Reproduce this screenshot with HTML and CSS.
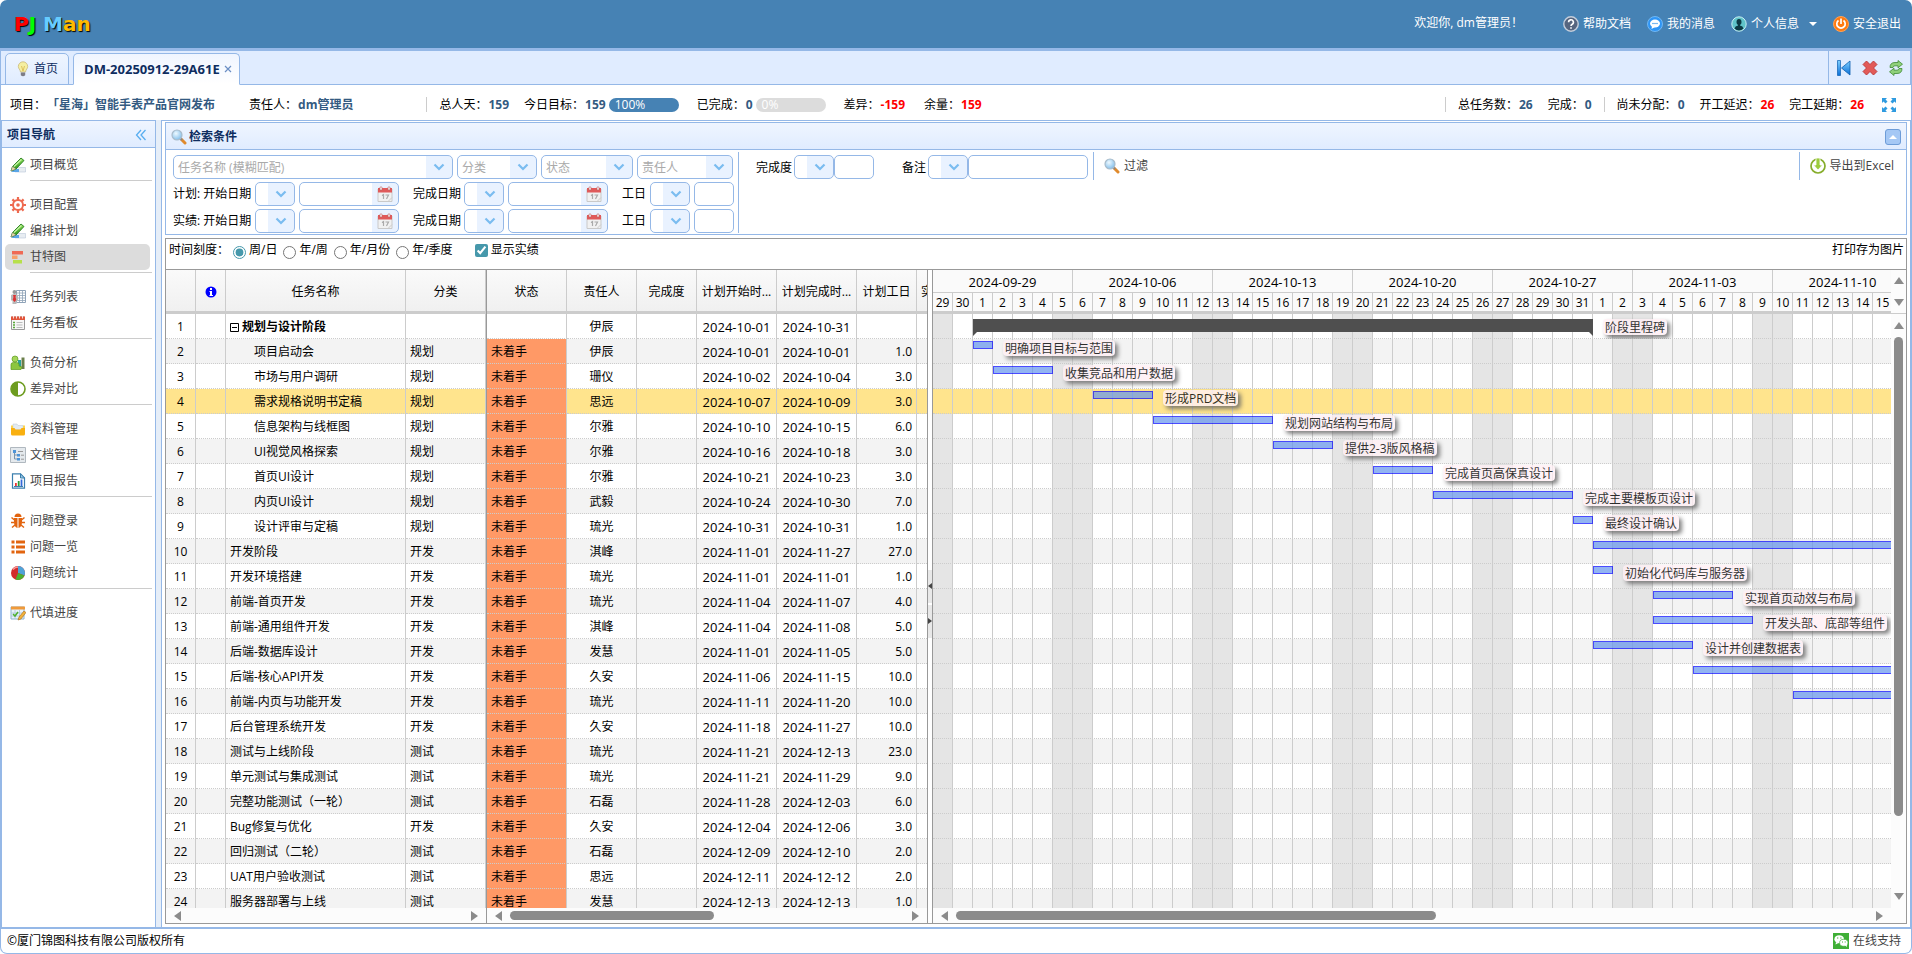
FILE: index.html
```html
<!DOCTYPE html>
<html lang="zh-CN">
<head>
    <meta charset="UTF-8">
    <meta name="viewport" content="width=device-width, initial-scale=1.0">
    <title>PJ Man</title>
    <link rel="stylesheet" href="styles.css">
</head>
<body>
    <svg class="sprite" aria-hidden="true">
        <defs>
            <linearGradient id="green" x1="0" y1="0" x2="0" y2="1"><stop offset="0" stop-color="#8fe05a"/><stop offset="1" stop-color="#1f8a12"/></linearGradient>
            <linearGradient id="blue" x1="0" y1="0" x2="0" y2="1"><stop offset="0" stop-color="#7fd0ff"/><stop offset="1" stop-color="#0a6fd8"/></linearGradient>
            <radialGradient id="lens" cx="0.4" cy="0.35" r="0.7"><stop offset="0" stop-color="#eef9ff"/><stop offset="1" stop-color="#7dbcea"/></radialGradient>
        </defs>
        <symbol id="i-down" viewBox="0 0 12 12"><path d="M1.500 3.500 6 8 10.500 3.500" fill="none" stroke="#7abcf0" stroke-width="2.200"/></symbol>
        <symbol id="i-cal" viewBox="0 0 16 16">
            <path d="M1 3h14v12.500H1z" fill="#f1f1f1" stroke="#c9c9c9"/>
            <path d="M1 2h14v4.500H1z" fill="#e05a5a"/>
            <path d="M3 1h2v3H3zM11 1h2v3h-2z" fill="#fff" stroke="#b66" stroke-width=".6"/>
            <path d="M5 9.500 6.500 8.500V13M8.500 9h3L9.500 13" fill="none" stroke="#aaa" stroke-width="1.200"/>
            <path d="M11 15.500 15 11.500" stroke="#ccc"/>
        </symbol>
        <symbol id="i-search" viewBox="0 0 16 16">
            <path d="M10 10 14 14" stroke="#e08a2c" stroke-width="3" stroke-linecap="round"/>
            <path d="M9 9 11 11" stroke="#888" stroke-width="2"/>
            <circle cx="6" cy="6" r="5" fill="url(#lens)" stroke="#a9bccb" stroke-width="1.200"/>
        </symbol>
        <symbol id="i-pen" viewBox="0 0 16 16">
            <path d="M5 10.500h10.500V15H5z" fill="#e8edf2" stroke="#b9c8d8" stroke-width=".6"/>
            <path d="M4 12h5v3H1.500z" fill="#5aa6e8"/>
            <path d="M1 14 2.500 9.500 11 1l3 2.500L6 12z" fill="url(#green)" stroke="#14700e" stroke-width=".8"/>
            <path d="M4 9.500 11.500 2.500" stroke="#c8f5a8" stroke-width="1.200"/>
            <path d="M1 14 2.500 9.500 6 12z" fill="#e9d8a6" stroke="#777" stroke-width=".4"/>
        </symbol>
        <symbol id="i-gear" viewBox="0 0 16 16">
            <circle cx="8" cy="8" r="5" fill="none" stroke="#ee6a50" stroke-width="2"/>
            <circle cx="8" cy="8" r="1.800" fill="#ee6a50"/>
            <path d="M8 0v3M8 13v3M0 8h3M13 8h3M2.400 2.400l2 2M11.600 11.600l2 2M2.400 13.600l2-2M11.600 4.400l2-2" stroke="#ee6a50" stroke-width="2.200"/>
        </symbol>
        <symbol id="i-gantt" viewBox="0 0 16 16">
            <path d="M2 2h11v3.500H2z" fill="#ef6a55"/><path d="M2 6.500h5.500V10H2z" fill="#f7a06a"/><path d="M3 11h9v3.500H3z" fill="#b7e04a"/>
        </symbol>
        <symbol id="i-tasks" viewBox="0 0 16 16">
            <path d="M6.500 1.500h9v12h-9z" fill="#fff" stroke="#8fa3b8"/>
            <path d="M6.500 4h9M6.500 6.500h9M6.500 9h9M6.500 11.500h9M9.500 1.500v12M12.500 1.500v12" stroke="#8fa3b8" stroke-width=".8"/>
            <circle cx="4.500" cy="3" r="2" fill="#999"/>
            <path d="M1 6q3.500-2 7 0v5.500H6.500V15h-4v-3.500H1z" fill="#b9b9b9"/>
            <path d="M3 6h3l-.5 2 .8 3-1.800 2-1.800-2 .8-3z" fill="#d33"/>
        </symbol>
        <symbol id="i-board" viewBox="0 0 16 16">
            <path d="M1.500 2h13v12.500h-13z" fill="#f7f7f7" stroke="#999"/><path d="M1 1.500h14V5H1z" fill="#e2543a"/>
            <path d="M3.500.5v3M6.500.5v3M9.500.5v3M12.500.5v3" stroke="#fff" stroke-width=".8"/>
            <path d="M3 7.500h2M3 10h2M3 12.500h2" stroke="#59a83c" stroke-width="1.500"/><path d="M6.500 7.500h6M6.500 10h6M6.500 12.500h6" stroke="#bbb"/>
        </symbol>
        <symbol id="i-load" viewBox="0 0 16 16">
            <path d="M8 5h3v9H8z" fill="#2aa198"/><path d="M11.500 2.500h3V14h-3z" fill="#6a7f4a"/>
            <circle cx="5" cy="4" r="3" fill="#a5d65a" stroke="#5b9a1c" stroke-width=".7"/>
            <path d="M1 13V9.500q0-2 2.500-2h3q2.500 0 2.500 2V11l3 1-1 2.500H1z" fill="#8cc63f" stroke="#5b9a1c" stroke-width=".7"/>
        </symbol>
        <symbol id="i-half" viewBox="0 0 16 16">
            <circle cx="8" cy="8" r="7" fill="#fff" stroke="#6d9c1f" stroke-width="1.600"/><path d="M8 1a7 7 0 0 0 0 14z" fill="#6d9c1f"/>
        </symbol>
        <symbol id="i-folder" viewBox="0 0 16 16">
            <path d="M3 3h4l1 1.500h5V9H3z" fill="#e3ebf2" stroke="#b9c6d2" stroke-width=".5"/><path d="M1 4.500h2V8H1zM13 4.500h2V8h-2z" fill="#fcd34d"/><path d="M1 7h3.500l1 1.500h5l1-1.500H15v6q0 1.500-1.500 1.500h-11Q1 14.500 1 13z" fill="#f9b010"/>
        </symbol>
        <symbol id="i-tree" viewBox="0 0 16 16">
            <path d="M.5.5h15v15H.5z" fill="#e4e9ed" stroke="#b0b8bf"/>
            <path d="M4.500 5v7M4.500 8h4M4.500 12h4" stroke="#7a94ad" fill="none"/>
            <path d="M3 3h3v3H3zM7 7h3v2.500H7zM7 11h3v2.500H7z" fill="#4d94d8"/><path d="M8 4.500h5M11 8.200h3M11 12.200h3" stroke="#999"/>
        </symbol>
        <symbol id="i-report" viewBox="0 0 16 16">
            <path d="M2.500.8h8L14.500 5v10.200h-12z" fill="#fff" stroke="#3b7fae" stroke-width="1.200"/><path d="M10.500.8V5h4z" fill="#9cc9e4" stroke="#3b7fae"/>
            <path d="M4 13.500h9" stroke="#3b7fae"/><path d="M5 10h1.800v3H5z" fill="#e33"/><path d="M7.800 8h1.800v5H7.800z" fill="#2a9a3a"/><path d="M10.600 6.500h1.800V13h-1.800z" fill="#3568d8"/>
        </symbol>
        <symbol id="i-bug" viewBox="0 0 16 16">
            <path d="M4.500 4q0-3.500 3.500-3.500T11.500 4zM4 5h3.500v10Q4 14 4 9zM8.500 5H12v4q0 5-3.500 6z" fill="#e2640f"/>
            <path d="M1.500 4.500 4.500 7M1 9.500h3M2 14.500l3-2.500M14.500 4.500l-3 2.500M15 9.500h-3M14 14.500l-3-2.500" stroke="#e2640f" stroke-width="1.500"/>
        </symbol>
        <symbol id="i-list" viewBox="0 0 16 16">
            <path d="M1.500 1.500h3v3h-3zM1.500 6.500h3v3h-3zM1.500 11.500h3v3h-3zM6 1.500h9v3H6zM6 6.500h9v3H6zM6 11.500h9v3H6z" fill="#e2640f"/>
        </symbol>
        <symbol id="i-pie" viewBox="0 0 16 16">
            <circle cx="8" cy="8" r="7" fill="#d22a2a"/><path d="M8 8V1a7 7 0 0 1 6.500 9.500z" fill="#4fa3d8"/><path d="M8 8l6.500 2.500A7 7 0 0 1 5.500 14.500z" fill="#4caf2e"/><path d="M3 4.500Q5 2 8 2" stroke="#f79a9a" stroke-width="1.500" fill="none"/>
        </symbol>
        <symbol id="i-fill" viewBox="0 0 16 16">
            <path d="M1 2h13v12H1z" fill="#e8f2fa" stroke="#8fb4d0"/><path d="M1 1.500h14v3H1z" fill="#f09a3a"/>
            <path d="M1 8h13M1 11h13M5 5v9M9.500 5v9" stroke="#a9c4da" stroke-width=".8"/><path d="M3 9l2 2 3-4" fill="none" stroke="#4caf2e" stroke-width="1.500"/>
            <path d="M8 15l1-3 5-6 2 1.500-5 6.500z" fill="#f2b23a" stroke="#a86a18" stroke-width=".6"/>
        </symbol>
    </svg>

    <div class="page">
        <header class="top">
            <h1 class="logo"><span class="c1">P</span><span class="c2">J</span> <span class="c3">M</span><span class="c4">an</span></h1>
            <span class="hello">欢迎你, dm管理员！</span>
            <nav class="top-links">
                <a href="#">
                    <svg class="icon" viewBox="0 0 16 16"><circle cx="8" cy="8" r="7.200" fill="#56657f" stroke="#c5cedb" stroke-width="1.400"/><path d="M5.600 6.300a2.400 2.400 0 1 1 3.600 2Q8 9 8 10M8 11.300v1.500" fill="none" stroke="#fff" stroke-width="1.600"/></svg>
                    帮助文档</a>
                <a href="#">
                    <svg class="icon" viewBox="0 0 16 16"><circle cx="8" cy="8" r="7.500" fill="#2f95f5" stroke="#7cc2fb" stroke-width=".8"/><ellipse cx="8" cy="7.500" rx="5" ry="4" fill="#fff"/><path d="M5 10.500 4.500 13 8 11z" fill="#fff"/><path d="M5 7.500h6" stroke="#7ab8f0" stroke-width="1.200"/></svg>
                    我的消息</a>
                <a href="#">
                    <svg class="icon" viewBox="0 0 16 16"><circle cx="8" cy="8" r="7.200" fill="#5fc3c9" stroke="#c8f0f2"/><ellipse cx="8" cy="6" rx="2.500" ry="3" fill="#0c3a44"/><path d="M3.500 12.500Q4 10 7 9.500V8h2v1.500q3 .5 3.500 3-2 2-4.500 2t-4.500-2z" fill="#0c3a44"/></svg>
                    个人信息<i class="caret"></i></a>
                <a href="#">
                    <svg class="icon" viewBox="0 0 16 16"><circle cx="8" cy="8" r="7.500" fill="#ff7a0f" stroke="#ffa257"/><path d="M5.500 4.500a4.200 4.200 0 1 0 5 0M8 2.500v5.500" fill="none" stroke="#fff" stroke-width="1.700"/></svg>
                    安全退出</a>
            </nav>
        </header>

        <div class="tabs">
            <a href="#" class="tab">
                <svg class="icon" viewBox="0 0 16 16"><path d="M8 .8a4.700 4.700 0 0 1 4.700 4.700c0 2-1.900 3-2.200 5.500h-5C5.200 8.500 3.300 7.500 3.300 5.500A4.700 4.700 0 0 1 8 .8z" fill="#f5efa0" stroke="#c9b97a" stroke-width=".8"/><path d="M6.500 5 8 10l1.500-5" fill="none" stroke="#d8b64a" stroke-width=".8"/><path d="M5.800 11.500h4.400v2.800q-2.200 2-4.400 0z" fill="#7d7d86"/></svg>
                首页</a>
            <a href="#" class="tab active">DM-20250912-29A61E
                <svg class="close" viewBox="0 0 8 8"><path d="M1 1l6 6M7 1 1 7" stroke="#6b8fc4" stroke-width="1.200"/></svg>
            </a>
            <div class="tab-tools">
                <button type="button" aria-label="返回"><svg class="icon" viewBox="0 0 16 16"><path d="M1.500.5h3v15h-3z" fill="url(#blue)" stroke="#0b5fb0" stroke-width=".7"/><path d="M14 1v14L5.500 8z" fill="url(#blue)" stroke="#0b5fb0" stroke-width=".8"/></svg></button>
                <button type="button" aria-label="关闭"><svg class="icon" viewBox="0 0 16 16"><path d="M4.500 1 8 4.500 11.500 1 15 4.500 11.500 8 15 11.500 11.500 15 8 11.500 4.500 15 1 11.500 4.500 8 1 4.500z" fill="#e25a58" stroke="#b93434" stroke-width=".9" stroke-linejoin="round"/></svg></button>
                <button type="button" aria-label="刷新"><svg class="icon" viewBox="0 0 16 16"><path d="M2 7.500Q2 2.500 7 2.500h3V.5l4.500 3.700L10 7.800V5.800H7Q5 5.800 5 7.500zM14 8.500q0 5-5 5H6v2l-4.500-3.700L6 8.200v2h3q2 0 2-1.700z" fill="#8fd07a" stroke="#3f8a34" stroke-width=".8"/></svg></button>
            </div>
        </div>

        <div class="info">
            <span>项目：</span><b>「星海」智能手表产品官网发布</b>
            <span class="owner">责任人：</span><b>dm管理员</b>
            <span class="sep wide"></span>
            <span>总人天：</span><b>159</b>
            <span class="gap">今日目标：</span><b>159</b><span class="pill full">100%</span>
            <span class="gap">已完成：</span><b>0</b><span class="pill">0%</span>
            <span class="gap">差异：</span><b class="red">-159</b>
            <span class="gap rest">余量：</span><b class="red">159</b>
            <div class="info-right">
                <span class="sep"></span>
                <span>总任务数：</span><b>26</b>
                <span class="gap">完成：</span><b>0</b>
                <span class="sep"></span>
                <span>尚未分配：</span><b>0</b>
                <span class="gap">开工延迟：</span><b class="red">26</b>
                <span class="gap">完工延期：</span><b class="red">26</b>
                <button type="button" class="expand" aria-label="全屏"><svg class="icon" viewBox="0 0 16 16"><path d="M1 1h5L4.500 2.500 6.500 4.500l-2 2L2.500 4.500 1 6zM15 1v5l-1.500-1.500-2 2-2-2 2-2L10 1zM1 15v-5l1.500 1.500 2-2 2 2-2 2L6 15zM15 15h-5l1.500-1.500-2-2 2-2 2 2L15 10z" fill="#2f9be0"/></svg></button>
            </div>
        </div>

        <div class="layout">
            <aside class="west">
                <div class="west-head">项目导航
                    <svg viewBox="0 0 12 12"><path d="M6 1 1.500 6 6 11M10.500 1 6 6l4.500 5" fill="none" stroke="#58aef0" stroke-width="1.300"/></svg>
                </div>
                <nav class="menu">
                    <div class="group">
                        <a href="#"><svg class="icon"><use href="#i-pen"/></svg>项目概览</a>
                    </div>
                    <div class="group">
                        <a href="#"><svg class="icon"><use href="#i-gear"/></svg>项目配置</a>
                        <a href="#"><svg class="icon"><use href="#i-pen"/></svg>编排计划</a>
                        <a href="#" class="on"><svg class="icon"><use href="#i-gantt"/></svg>甘特图</a>
                    </div>
                    <div class="group">
                        <a href="#"><svg class="icon"><use href="#i-tasks"/></svg>任务列表</a>
                        <a href="#"><svg class="icon"><use href="#i-board"/></svg>任务看板</a>
                    </div>
                    <div class="group">
                        <a href="#"><svg class="icon"><use href="#i-load"/></svg>负荷分析</a>
                        <a href="#"><svg class="icon"><use href="#i-half"/></svg>差异对比</a>
                    </div>
                    <div class="group">
                        <a href="#"><svg class="icon"><use href="#i-folder"/></svg>资料管理</a>
                        <a href="#"><svg class="icon"><use href="#i-tree"/></svg>文档管理</a>
                        <a href="#"><svg class="icon"><use href="#i-report"/></svg>项目报告</a>
                    </div>
                    <div class="group">
                        <a href="#"><svg class="icon"><use href="#i-bug"/></svg>问题登录</a>
                        <a href="#"><svg class="icon"><use href="#i-list"/></svg>问题一览</a>
                        <a href="#"><svg class="icon"><use href="#i-pie"/></svg>问题统计</a>
                    </div>
                    <div class="group">
                        <a href="#"><svg class="icon"><use href="#i-fill"/></svg>代填进度</a>
                    </div>
                </nav>
            </aside>

            <main class="center">
                <section class="search">
                    <div class="search-head">
                        <svg class="icon"><use href="#i-search"/></svg>检索条件
                        <button type="button" class="fold" aria-label="收起"><i></i></button>
                    </div>
                    <form class="search-body">
                        <div class="filters">
                            <div class="line">
                                <span class="combo w280"><select aria-label="任务名称"><option>任务名称 (模糊匹配)</option></select><svg><use href="#i-down"/></svg></span>
                                <span class="combo w80"><select aria-label="分类"><option>分类</option></select><svg><use href="#i-down"/></svg></span>
                                <span class="combo w92"><select aria-label="状态"><option>状态</option></select><svg><use href="#i-down"/></svg></span>
                                <span class="combo w96"><select aria-label="责任人"><option>责任人</option></select><svg><use href="#i-down"/></svg></span>
                            </div>
                            <div class="line">
                                <label for="p1">计划: 开始日期</label>
                                <span class="combo w40"><select id="p1"><option></option></select><svg><use href="#i-down"/></svg></span>
                                <span class="combo w100"><input type="text" aria-label="计划开始日期"><svg class="cal"><use href="#i-cal"/></svg></span>
                                <label for="p2" class="l2">完成日期</label>
                                <span class="combo w40"><select id="p2"><option></option></select><svg><use href="#i-down"/></svg></span>
                                <span class="combo w100"><input type="text" aria-label="计划完成日期"><svg class="cal"><use href="#i-cal"/></svg></span>
                                <label for="p3" class="l3">工日</label>
                                <span class="combo w40"><select id="p3"><option></option></select><svg><use href="#i-down"/></svg></span>
                                <input type="text" class="plain w40" aria-label="计划工日">
                            </div>
                            <div class="line">
                                <label for="a1">实绩: 开始日期</label>
                                <span class="combo w40"><select id="a1"><option></option></select><svg><use href="#i-down"/></svg></span>
                                <span class="combo w100"><input type="text" aria-label="实绩开始日期"><svg class="cal"><use href="#i-cal"/></svg></span>
                                <label for="a2" class="l2">完成日期</label>
                                <span class="combo w40"><select id="a2"><option></option></select><svg><use href="#i-down"/></svg></span>
                                <span class="combo w100"><input type="text" aria-label="实绩完成日期"><svg class="cal"><use href="#i-cal"/></svg></span>
                                <label for="a3" class="l3">工日</label>
                                <span class="combo w40"><select id="a3"><option></option></select><svg><use href="#i-down"/></svg></span>
                                <input type="text" class="plain w40" aria-label="实绩工日">
                            </div>
                        </div>
                        <div class="extra">
                            <label for="rate">完成度</label>
                            <span class="combo w40"><select id="rate"><option></option></select><svg><use href="#i-down"/></svg></span>
                            <input type="text" class="plain w40" aria-label="完成度值">
                            <label for="memo" class="memo">备注</label>
                            <span class="combo w40"><select id="memo"><option></option></select><svg><use href="#i-down"/></svg></span>
                            <input type="text" class="plain w120" aria-label="备注内容">
                        </div>
                        <button type="button" class="tool"><svg class="icon"><use href="#i-search"/></svg>过滤</button>
                        <button type="button" class="tool export">
                            <svg class="icon" viewBox="0 0 16 16"><circle cx="8" cy="8" r="7" fill="#fff" stroke="#86ad2b" stroke-width="1.700"/><path d="M6 0h4v7h2.500L8 12 3.500 7H6z" fill="#9ccc3c" stroke="#fff" stroke-width=".8"/></svg>
                            导出到Excel</button>
                    </form>
                </section>

                <section class="gantt">
                    <div class="scale">
                        <span class="scale-label">时间刻度：</span>
                        <label><input type="radio" name="scale" checked>周/日</label>
                        <label><input type="radio" name="scale">年/周</label>
                        <label><input type="radio" name="scale">年/月份</label>
                        <label><input type="radio" name="scale">年/季度</label>
                        <label class="check"><input type="checkbox" checked>显示实绩</label>
                        <a href="#" class="print">打印存为图片</a>
                    </div>
                    <div class="panes">
                        <div class="pane frozen">
                            <div class="view">
                                <table>
                                    <colgroup><col class="c30"><col class="c30"><col class="c180"><col class="c80"></colgroup>
                                    <thead><tr><th></th><th><svg class="tip" viewBox="0 0 12 12"><circle cx="6" cy="6" r="5.500" fill="#00f"/><path d="M5 2h2v2H5zM4.500 5H7v4h1v1H4.500V9H5V6h-.5z" fill="#fff"/></svg></th><th>任务名称</th><th>分类</th></tr></thead>
                                    <tbody id="frozen"></tbody>
                                </table>
                            </div>
                            <div class="hbar"><i class="left"></i><i class="right"></i></div>
                        </div>
                        <div class="pane detail">
                            <div class="view">
                                <table>
                                    <colgroup><col class="c80"><col class="c70"><col class="c60"><col class="c80"><col class="c80"><col class="c60"><col class="c30"></colgroup>
                                    <thead><tr><th>状态</th><th>责任人</th><th>完成度</th><th>计划开始时...</th><th>计划完成时...</th><th>计划工日</th><th class="last">实绩</th></tr></thead>
                                    <tbody id="detail"></tbody>
                                </table>
                            </div>
                            <div class="hbar"><i class="left"></i><b class="thumb t204"></b><i class="right"></i></div>
                        </div>
                        <div class="splitter"><span><i class="left"></i></span><span><i class="right"></i></span></div>
                        <div class="pane chart">
                            <div class="chart-main">
                                <div class="view">
                                    <div class="weeks" id="weeks"></div>
                                    <div class="days" id="days"></div>
                                    <div class="lanes" id="lanes"></div>
                                </div>
                                <div class="vbar">
                                    <div class="spin"><i class="up"></i><i class="down"></i></div>
                                    <i class="up"></i><b class="vthumb"></b><i class="down"></i>
                                </div>
                            </div>
                            <div class="hbar inset"><i class="left"></i><b class="thumb t480"></b><i class="right"></i></div>
                        </div>
                    </div>
                </section>
            </main>
        </div>

        <footer class="foot">
            <span>©厦门锦图科技有限公司版权所有</span>
            <a href="#"><svg class="icon" viewBox="0 0 16 16"><path d="M0 0h16v16H0z" fill="#3faf36"/><ellipse cx="6.200" cy="6.200" rx="4.800" ry="4" fill="#fff"/><path d="M3 9 2.500 11.500 5.500 10z" fill="#fff"/><ellipse cx="10.800" cy="9.800" rx="4.200" ry="3.500" fill="#fff" stroke="#3faf36" stroke-width=".7"/><path d="M12 12.500l2 1.500-.3-2.500z" fill="#fff"/><path d="M4 5h1.300M7.200 5h1.300M9 9h1M11.700 9h1" stroke="#3faf36" stroke-width="1.200"/></svg>在线支持</a>
        </footer>
    </div>
    <script src="gantt.js"></script>
</body>
</html>
```

FILE: styles.css
```css
* {
    box-sizing: border-box;
}

body {
    margin: 0;
    font: 12px/16px "Open Sans", "Noto Sans CJK SC", sans-serif;
    color: #000;
    background: #fff;
}

a {
    color: inherit;
    text-decoration: none;
}

button {
    font: inherit;
    padding: 0;
    border: 0;
    background: none;
    cursor: pointer;
}

/* display: none would switch the gradients off */
.sprite {
    position: absolute;
    width: 0;
    height: 0;
}

.icon {
    width: 16px;
    height: 16px;
    flex: none;
    display: block;
}

.page {
    display: flex;
    flex-direction: column;
    height: 100vh;
    overflow: hidden;
}

/* header */
.top {
    display: flex;
    align-items: center;
    height: 51px;
    flex: none;
    padding: 0 11px 3px 14px;
    background: #4682b4;
    border-bottom: 3px solid #95b8e7;
    border-radius: 7px 7px 0 0;
    color: #fff;
}

.logo {
    margin: 0;
    padding-top: 2px;
    font: bold 20px/24px "DejaVu Sans", sans-serif;
    text-shadow: 1px 1px 1px #000;
}

.c1 { color: #f00; }
.c2 { color: #0f0; }
.c3 { color: #6cf; }
.c4 { color: #fb0; }

.hello {
    margin-left: auto;
    margin-right: 40px;
}

.top-links {
    display: flex;
    gap: 16px;
    padding-top: 2px;
}

.top-links a {
    display: flex;
    align-items: center;
    gap: 4px;
}

.caret {
    margin: 0 0 0 6px;
    border: 4px solid transparent;
    border-top-color: #fff;
    border-bottom: 0;
}

/* tabs */
.tabs {
    display: flex;
    align-items: flex-end;
    gap: 4px;
    height: 34px;
    flex: none;
    padding-left: 4px;
    background: #e0ecff;
    border: solid #95b8e7;
    border-width: 0 2px 0 1px;
    box-shadow: inset 0 -1px #95b8e7;
}

.tab {
    display: flex;
    align-items: center;
    gap: 3px;
    height: 32px;
    padding: 0 10px 0 9px;
    color: #0e2d5f;
    border: 1px solid #95b8e7;
    border-radius: 5px 5px 0 0;
    background: linear-gradient(#eff5ff, #e0ecff);
}

.tab.active {
    padding: 0 7px 0 10px;
    font-size: 13px;
    font-weight: bold;
    background: linear-gradient(#eff5ff, #fff);
    border-bottom-color: #fff;
}

.close {
    width: 8px;
    height: 8px;
    margin-left: 1px;
}

.tab-tools {
    display: flex;
    align-items: center;
    gap: 10px;
    height: 33px;
    margin-left: auto;
    margin-bottom: 1px;
    padding: 0 6px 0 7px;
    border-left: 1px solid #95b8e7;
}

/* project summary */
.info {
    display: flex;
    align-items: center;
    height: 35px;
    flex: none;
    padding: 4px 14px 0 9px;
    border: solid #95b8e7;
    border-width: 0 1px;
    white-space: nowrap;
}

.info b {
    color: #335a81;
    margin-left: 1px;
}

.info .red {
    color: #f00;
}

.info .owner {
    margin-left: 34px;
}

.info .gap {
    margin-left: 15px;
}

.info .rest {
    margin-left: 19px;
}

.sep {
    width: 1px;
    height: 15px;
    margin: 0 12px;
    background: #ccc;
}

.sep.wide {
    margin-left: 73px;
}

.pill {
    width: 70px;
    height: 14px;
    margin: 0 3px;
    padding-left: 6px;
    line-height: 14px;
    border-radius: 7px;
    background: #dcdcdc;
    color: #fff;
}

.pill.full {
    background: #4682b4;
}

.info-right {
    display: flex;
    align-items: center;
    margin-left: auto;
}

.expand {
    margin-left: 17px;
}

/* body */
.layout {
    display: flex;
    gap: 5px;
    flex: 1;
    min-height: 0;
    background: #e6eef8;
    border: solid #95b8e7;
    border-width: 0 2px 2px 1px;
}

.west {
    width: 155px;
    flex: none;
    background: #fff;
    border: 1px solid #95b8e7;
    border-bottom: 0;
}

.west-head {
    display: flex;
    align-items: center;
    justify-content: space-between;
    height: 27px;
    padding: 1px 8px 0 5px;
    font-weight: bold;
    color: #0e2d5f;
    background: linear-gradient(#eff5ff, #e0ecff);
    border-bottom: 1px solid #95b8e7;
}

.west-head svg {
    width: 12px;
    height: 12px;
}

.menu {
    padding: 4px 3px 0;
    color: #444;
}

.menu a {
    display: flex;
    align-items: center;
    gap: 4px;
    height: 26px;
    margin-right: 2px;
    padding-left: 5px;
    border-radius: 5px;
}

.menu .on {
    background: #dcdcdc;
}

.group + .group::before {
    content: "";
    display: block;
    height: 1px;
    margin: 2px 0 11px 25px;
    background: #ccc;
}

.center {
    display: flex;
    flex-direction: column;
    gap: 3px;
    flex: 1;
    min-width: 0;
    padding: 1px 3px 3px;
    background: #fff;
    border: solid #95b8e7;
    border-width: 1px 0 0 1px;
}

/* search panel */
.search {
    border: 1px solid #95b8e7;
}

.search-head {
    display: flex;
    align-items: center;
    gap: 2px;
    height: 27px;
    padding: 1px 5px 0;
    font-weight: bold;
    color: #0e2d5f;
    background: linear-gradient(#eff5ff, #e0ecff);
    border-bottom: 1px solid #95b8e7;
}

.fold {
    display: flex;
    align-items: center;
    justify-content: center;
    width: 16px;
    height: 16px;
    margin-left: auto;
    border: 1px solid #6d9cd8;
    border-radius: 3px;
    background: #a5c8f5;
}

.fold i {
    border: 4px solid transparent;
    border-bottom-color: #fff;
    border-top: 0;
}

.search-body {
    display: flex;
    align-items: flex-start;
    padding: 2px 4px 1px 7px;
}

.filters {
    display: grid;
    gap: 3px;
    padding: 3px 4px 0 0;
    border-right: 1px solid #95b8e7;
}

.line {
    display: flex;
    align-items: center;
    gap: 4px;
}

.line label {
    width: 78px;
    white-space: nowrap;
}

.line .l2 {
    width: 47px;
    margin-left: 10px;
}

.line .l3 {
    width: 24px;
    margin-left: 10px;
}

.combo {
    display: flex;
    position: relative;
    height: 24px;
    border: 1px solid #95b8e7;
    border-radius: 5px;
    background: linear-gradient(#e9f2ff, #e9f2ff) right / 26px 100% no-repeat #fff;
    overflow: hidden;
}

.combo select,
.combo input {
    appearance: none;
    width: 100%;
    padding: 1px 28px 0 4px;
    border: 0;
    background: none;
    font: inherit;
    color: #aaa;
}

/* the arrow lies over the select */
.combo svg {
    position: absolute;
    right: 7px;
    top: 5px;
    width: 12px;
    height: 12px;
    pointer-events: none;
}

.combo .cal {
    right: 5px;
    top: 3px;
    width: 16px;
    height: 16px;
}

.plain {
    height: 24px;
    padding: 0 4px;
    border: 1px solid #95b8e7;
    border-radius: 5px;
    font: inherit;
}

.w40 { width: 40px; }
.w80 { width: 80px; }
.w92 { width: 92px; }
.w96 { width: 96px; }
.w100 { width: 100px; }
.w120 { width: 120px; }
.w280 { width: 280px; }

.extra {
    display: flex;
    align-items: center;
    padding: 3px 5px 0 17px;
}

.extra label {
    padding-top: 2px;
    margin-right: 2px;
}

.extra .memo {
    margin-left: 28px;
}

.tool {
    display: flex;
    align-items: center;
    gap: 4px;
    height: 28px;
    padding-left: 10px;
    border-left: 1px solid #95b8e7;
    color: #444;
}

.export {
    margin-left: auto;
    padding-right: 8px;
}

/* gantt */
.gantt {
    display: flex;
    flex-direction: column;
    flex: 1;
    min-height: 0;
    border: 1px solid #999;
}

.scale {
    display: flex;
    height: 31px;
    flex: none;
    padding: 3px 2px 0 3px;
    border-bottom: 1px solid #999;
}

.scale label {
    display: flex;
    align-items: flex-start;
    gap: 3px;
    margin-right: 6px;
}

.scale-label {
    width: 64px;
}

.scale input {
    width: 13px;
    height: 13px;
    margin: 4px 0 0;
    accent-color: #4698ab;
}

.scale .check {
    margin-left: 16px;
}

.scale .check input {
    margin-top: 2px;
}

.print {
    margin-left: auto;
}

.panes {
    display: flex;
    flex: 1;
    min-height: 0;
}

.pane {
    display: flex;
    flex-direction: column;
    flex: none;
    min-width: 0;
}

.frozen {
    width: 321px;
    border-right: 1px solid #999;
}

.detail {
    width: 440px;
}

.pane.chart {
    flex: 1;
}

.view {
    flex: 1;
    min-width: 0;
    min-height: 0;
    overflow: hidden;
}

table {
    table-layout: fixed;
    width: 0;
    border-collapse: separate;
    border-spacing: 0;
}

.c30 { width: 30px; }
.c60 { width: 60px; }
.c70 { width: 70px; }
.c80 { width: 80px; }
.c180 { width: 180px; }

th {
    height: 44px;
    padding: 2px 0 0;
    font-weight: normal;
    white-space: nowrap;
    overflow: hidden;
    background: linear-gradient(#fafafa, #f0f0f0);
    border-right: 1px solid #ccc;
    border-bottom: 3px solid #ccc;
}

.last {
    padding-left: 4px;
    text-align: left;
}

td {
    height: 25px;
    padding: 2px 4px 0;
    white-space: nowrap;
    overflow: hidden;
    border-right: 1px solid #ccc;
    border-bottom: 1px dotted #ccc;
}

.tip {
    display: block;
    width: 12px;
    height: 12px;
    margin: 0 auto;
}

.mid { text-align: center; }
.num { text-align: right; }

.date {
    padding-left: 0;
    padding-right: 0;
    font-size: 13px;
    text-align: center;
}

.sub {
    padding-left: 28px;
}

.todo {
    background: #f96;
}

tbody tr:nth-child(even),
.lane:nth-child(even) {
    background-color: #f3f3f3;
}

tbody .picked:nth-child(even),
.lane.picked:nth-child(even) {
    background-color: #ffe48d;
}

.stage {
    display: flex;
    align-items: center;
    gap: 3px;
    font-weight: bold;
}

.stage svg {
    width: 9px;
    height: 9px;
}

/* timeline */
.weeks,
.days {
    display: flex;
    height: 23px;
    background: #fafafa;
}

.weeks span {
    width: 140px;
    flex: none;
    font-size: 13px;
    line-height: 24px;
    text-align: center;
    border: solid #ccc;
    border-width: 0 1px 1px 0;
}

.days {
    height: 21px;
    border-bottom: 3px solid #ccc;
}

.days span {
    width: 20px;
    flex: none;
    line-height: 20px;
    text-align: center;
    border-right: 1px solid #ccc;
}

.lane {
    position: relative;
    height: 25px;
    border-bottom: 1px dotted #ccc;
    background-image:
        repeating-linear-gradient(90deg, transparent 0 19px, #ccc 19px 20px),
        repeating-linear-gradient(90deg, #e5e5e5 0 20px, transparent 20px 120px, #e5e5e5 120px 140px);
}

.lane.picked {
    background-image: repeating-linear-gradient(90deg, transparent 0 19px, #ccc 19px 20px);
}

.bar {
    position: absolute;
    top: 2px;
    height: 8px;
    border: 1px solid #00f;
    background: #6495ed;
    opacity: 0.7;
}

.bar.sum {
    top: 5px;
    height: 17px;
    border: 0;
    background: #4f4f4f;
    opacity: 1;
    clip-path: polygon(0 0, 100% 0, 100% 100%, calc(100% - 4px) 13px, 4px 13px, 0 100%);
}

.note {
    position: absolute;
    top: 1px;
    height: 16px;
    margin-left: 10px;
    padding: 0 2px;
    line-height: 18px;
    white-space: nowrap;
    border-radius: 4px;
    background: #fff0f5;
    box-shadow: 3px 3px 4px #666;
    opacity: 0.8;
}

.sum + .note {
    top: 5px;
}

/* scroll bars */
.hbar {
    display: flex;
    align-items: center;
    height: 15px;
    flex: none;
    padding: 0 8px;
    background: #fcfcfc;
}

.hbar.inset {
    padding-right: 23px;
}

.left,
.right,
.up,
.down {
    border: 5px solid transparent;
}

.left {
    border-left: 0;
    border-right: 7px solid #8b8b8b;
}

.right {
    border-right: 0;
    border-left: 7px solid #8b8b8b;
    margin-left: auto;
}

.up {
    border-top: 0;
    border-bottom: 7px solid #8b8b8b;
}

.down {
    border-bottom: 0;
    border-top: 7px solid #8b8b8b;
    margin-top: auto;
}

.thumb {
    height: 9px;
    margin-left: 8px;
    border-radius: 5px;
    background: #8b8b8b;
}

.t204 { width: 204px; }
.t480 { width: 480px; }

.splitter {
    display: flex;
    flex-direction: column;
    justify-content: center;
    gap: 2px;
    width: 6px;
    flex: none;
    border: solid #999;
    border-width: 0 1px;
    padding-top: 14px;
}

.splitter span {
    display: flex;
    align-items: center;
    height: 33px;
    background: #e8e8e8;
}

.splitter i {
    margin: 0;
    border-width: 3px 4px 3px 0;
    border-right-color: #444;
}

.splitter .right {
    border-width: 3px 0 3px 4px;
    border-left-color: #444;
}

.chart-main {
    display: flex;
    flex: 1;
    min-height: 0;
}

.vbar {
    display: flex;
    flex-direction: column;
    align-items: center;
    width: 15px;
    flex: none;
    padding-bottom: 8px;
    background: #fcfcfc;
}

.spin {
    display: flex;
    flex-direction: column;
    align-items: center;
    width: 100%;
    height: 44px;
    margin-bottom: 8px;
    padding: 7px 0;
    border-bottom: 1px solid #ccc;
}

.vthumb {
    width: 9px;
    height: 76%;
    margin-top: 8px;
    border-radius: 5px;
    background: #8b8b8b;
}

/* footer */
.foot {
    display: flex;
    align-items: center;
    justify-content: space-between;
    height: 25px;
    flex: none;
    padding: 0 10px 0 6px;
    border: 1px solid #95b8e7;
    border-top: 0;
    border-radius: 0 0 7px 7px;
}

.foot a {
    display: flex;
    gap: 4px;
    color: #444;
}
```

FILE: gantt.js
```js
// 名称, 分类, 责任人, 开始, 完成, 工日, 备注
var tasks = [
    ["规划与设计阶段", "", "伊辰", "2024-10-01", "2024-10-31", "", "阶段里程碑"],
    ["项目启动会", "规划", "伊辰", "2024-10-01", "2024-10-01", "1.0", "明确项目目标与范围"],
    ["市场与用户调研", "规划", "珊仪", "2024-10-02", "2024-10-04", "3.0", "收集竞品和用户数据"],
    ["需求规格说明书定稿", "规划", "思远", "2024-10-07", "2024-10-09", "3.0", "形成PRD文档"],
    ["信息架构与线框图", "规划", "尔雅", "2024-10-10", "2024-10-15", "6.0", "规划网站结构与布局"],
    ["UI视觉风格探索", "规划", "尔雅", "2024-10-16", "2024-10-18", "3.0", "提供2-3版风格稿"],
    ["首页UI设计", "规划", "尔雅", "2024-10-21", "2024-10-23", "3.0", "完成首页高保真设计"],
    ["内页UI设计", "规划", "武毅", "2024-10-24", "2024-10-30", "7.0", "完成主要模板页设计"],
    ["设计评审与定稿", "规划", "琉光", "2024-10-31", "2024-10-31", "1.0", "最终设计确认"],
    ["开发阶段", "开发", "淇峰", "2024-11-01", "2024-11-27", "27.0", ""],
    ["开发环境搭建", "开发", "琉光", "2024-11-01", "2024-11-01", "1.0", "初始化代码库与服务器"],
    ["前端-首页开发", "开发", "琉光", "2024-11-04", "2024-11-07", "4.0", "实现首页动效与布局"],
    ["前端-通用组件开发", "开发", "淇峰", "2024-11-04", "2024-11-08", "5.0", "开发头部、底部等组件"],
    ["后端-数据库设计", "开发", "发慧", "2024-11-01", "2024-11-05", "5.0", "设计并创建数据表"],
    ["后端-核心API开发", "开发", "久安", "2024-11-06", "2024-11-15", "10.0", ""],
    ["前端-内页与功能开发", "开发", "琉光", "2024-11-11", "2024-11-20", "10.0", ""],
    ["后台管理系统开发", "开发", "久安", "2024-11-18", "2024-11-27", "10.0", ""],
    ["测试与上线阶段", "测试", "琉光", "2024-11-21", "2024-12-13", "23.0", ""],
    ["单元测试与集成测试", "测试", "琉光", "2024-11-21", "2024-11-29", "9.0", ""],
    ["完整功能测试（一轮）", "测试", "石磊", "2024-11-28", "2024-12-03", "6.0", ""],
    ["Bug修复与优化", "开发", "久安", "2024-12-04", "2024-12-06", "3.0", ""],
    ["回归测试（二轮）", "测试", "石磊", "2024-12-09", "2024-12-10", "2.0", ""],
    ["UAT用户验收测试", "测试", "思远", "2024-12-11", "2024-12-12", "2.0", ""],
    ["服务器部署与上线", "测试", "发慧", "2024-12-13", "2024-12-13", "1.0", ""]
];

var DAY = 86400000;
var DAY_WIDTH = 20;
var WEEKS = 7;
var start = Date.parse("2024-09-29");

function dayIndex(date) {
    return (Date.parse(date) - start) / DAY;
}

// 时间轴表头
var weeks = "", days = "";
for (var i = 0; i < WEEKS * 7; i++) {
    var d = new Date(start + i * DAY);
    if (i % 7 === 0) {
        weeks += "<span>" + d.toISOString().slice(0, 10) + "</span>";
    }
    days += "<span>" + d.getUTCDate() + "</span>";
}
document.getElementById("weeks").innerHTML = weeks;
document.getElementById("days").innerHTML = days;

// 任务行
var frozen = "", detail = "", lanes = "";
var box = '<svg viewBox="0 0 9 9"><path d="M.5.5h8v8h-8zM2 4.500h5" fill="none" stroke="#000"/></svg>';
tasks.forEach(function (t, n) {
    var picked = n === 3 ? ' class="picked"' : "";
    var name = n === 0 ? '<td><div class="stage">' + box + t[0] + "</div></td>"
        : "<td" + (n < 9 ? ' class="sub"' : "") + ">" + t[0] + "</td>";

    frozen += "<tr" + picked + '><td class="mid">' + (n + 1) + "</td><td></td>" + name + "<td>" + t[1] + "</td></tr>";
    detail += "<tr" + picked + ">" + (n === 0 ? "<td></td>" : '<td class="todo">未着手</td>') +
        '<td class="mid">' + t[2] + '</td><td></td><td class="date">' + t[3] + '</td><td class="date">' + t[4] +
        '</td><td class="num">' + t[5] + "</td><td></td></tr>";

    var left = dayIndex(t[3]) * DAY_WIDTH;
    var width = (dayIndex(t[4]) + 1) * DAY_WIDTH - left;
    lanes += '<div class="lane' + (n === 3 ? " picked" : "") + '">';
    if (left < WEEKS * 7 * DAY_WIDTH) {
        lanes += '<div class="bar' + (n === 0 ? " sum" : "") + '" style="left:' + left + "px;width:" + width + 'px"></div>';
        if (t[6]) {
            lanes += '<span class="note" style="left:' + (left + width) + 'px">' + t[6] + "</span>";
        }
    }
    lanes += "</div>";
});
document.getElementById("frozen").innerHTML = frozen;
document.getElementById("detail").innerHTML = detail;
document.getElementById("lanes").innerHTML = lanes;
```
